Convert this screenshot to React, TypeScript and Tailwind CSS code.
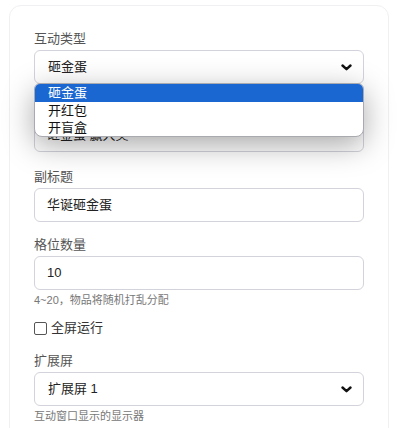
import React from "react";

const font = { fontFamily: '"Liberation Sans", "Noto Sans CJK SC", sans-serif' };

function Chevron() {
  return (
    <svg width="11" height="7" viewBox="0 0 11 7" className="shrink-0">
      <path d="M1.5 1.5 L5.5 5.2 L9.5 1.5" fill="none" stroke="#111" strokeWidth="2.4" strokeLinecap="round" strokeLinejoin="round" />
    </svg>
  );
}

function Label({ children }: { children: React.ReactNode }) {
  return <div className="mb-[1px] h-[21px] text-[13px] leading-[21px] text-[#555]">{children}</div>;
}

function FakeSelect({ value }: { value: string }) {
  return (
    <div className="flex h-[34px] items-center justify-between rounded-md border border-[#d3d3dc] bg-white pl-[13px] pr-[11px] text-[13px] text-[#222]">
      <span>{value}</span>
      <Chevron />
    </div>
  );
}

function TextInput({ value }: { value: string }) {
  return (
    <div className="flex h-[34px] items-center rounded-md border border-[#d3d3dc] bg-white px-[12px] text-[13px] text-[#222]">
      {value}
    </div>
  );
}

function Help({ children }: { children: React.ReactNode }) {
  return <div className="mt-[2px] h-4 text-[11px] leading-4 text-[#777]">{children}</div>;
}

const options = ["砸金蛋", "开红包", "开盲盒"];

export default function App() {
  return (
    <div className="h-[428px] w-[399px] overflow-hidden bg-white" style={font}>
      <div className="ml-[9px] mt-[5px] w-[380px] rounded-xl border border-[#f0f0f2] bg-white px-6 pb-10 pt-[22px]">
        <div className="relative z-10 mb-3">
          <Label>互动类型</Label>
          <FakeSelect value="砸金蛋" />
          <div className="absolute left-0 right-0 top-[55px] overflow-hidden rounded-b-lg rounded-t-md border border-[#a9a9b0] bg-white shadow-[0_8px_30px_rgba(0,0,0,0.34)]">
            {options.map((o, i) => (
              <div
                key={o}
                className={
                  i === 0
                    ? "h-[18px] bg-[#1a67d2] px-[13px] text-[13px] leading-[18px] text-white"
                    : "h-[17px] px-[13px] text-[13px] leading-[17px] text-[#111]"
                }
              >
                {o}
              </div>
            ))}
          </div>
        </div>

        <div className="mb-[14px]">
          <Label>标题</Label>
          <TextInput value="砸金蛋 赢大奖" />
        </div>

        <div className="mb-3">
          <Label>副标题</Label>
          <TextInput value="华诞砸金蛋" />
        </div>

        <div className="mb-[10px]">
          <Label>格位数量</Label>
          <TextInput value="10" />
          <Help>4~20，物品将随机打乱分配</Help>
        </div>

        <label className="mb-3 flex h-5 items-center gap-[4px] text-[13px] text-[#333]">
          <span className="h-[13px] w-[13px] rounded-[2px] border border-[#555] bg-white" />
          <span>全屏运行</span>
        </label>

        <div>
          <Label>扩展屏</Label>
          <FakeSelect value="扩展屏 1" />
          <Help>互动窗口显示的显示器</Help>
        </div>
      </div>
    </div>
  );
}
